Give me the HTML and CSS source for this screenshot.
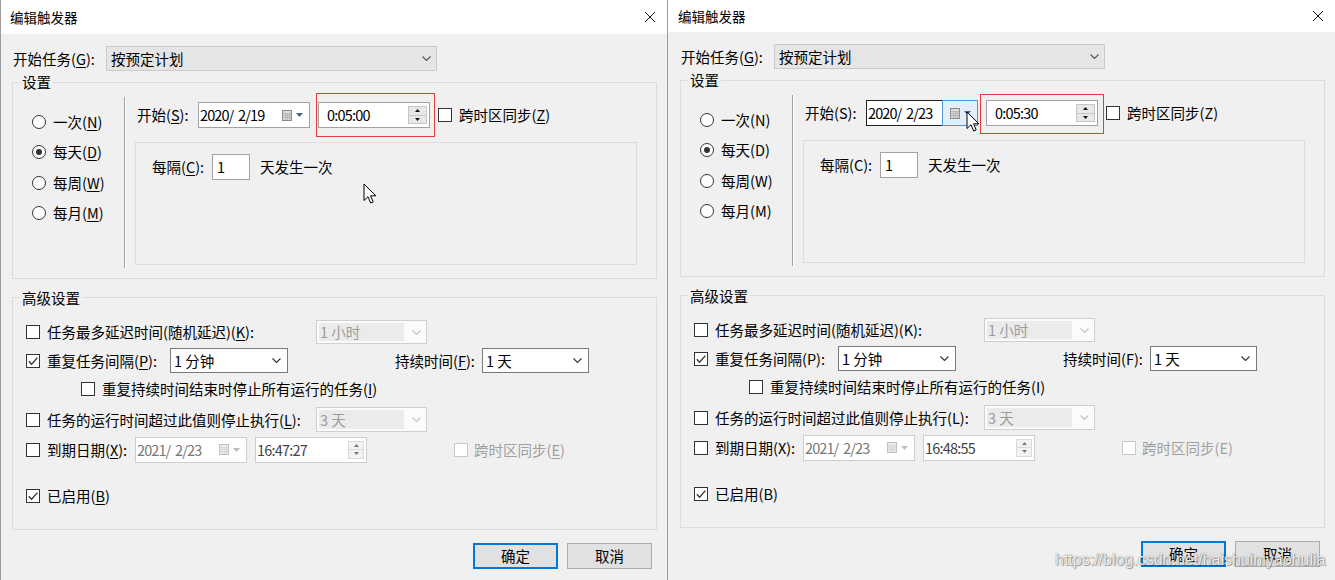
FILE: index.html
```html
<!DOCTYPE html>
<html lang="zh-CN">
<head>
<meta charset="utf-8">
<title>编辑触发器</title>
<link rel="stylesheet" href="styles.css">
</head>
<body>
<div class="screen">

  <!-- LEFT DIALOG -->
  <section class="dialog dl">
    <header class="titlebar">
      <span class="title">编辑触发器</span>
      <svg class="close" viewBox="0 0 10 10"><path d="M0 0L10 10M10 0L0 10"/></svg>
    </header>
    <div class="body">
      <div class="start-row">
        <span class="lbl-start">开始任务(<u>G</u>):</span>
        <div class="combo combo-main"><span class="ctext">按预定计划</span><svg class="chev" viewBox="0 0 9 5"><path d="M0.5 0.5L4.5 4.5L8.5 0.5"/></svg></div>
      </div>

      <fieldset class="group">
        <legend>设置</legend>
        <div class="settings">
          <div class="radios">
            <div class="radio-row"><span class="radio"></span><span>一次(<u>N</u>)</span></div>
            <div class="radio-row"><span class="radio on"></span><span>每天(<u>D</u>)</span></div>
            <div class="radio-row"><span class="radio"></span><span>每周(<u>W</u>)</span></div>
            <div class="radio-row"><span class="radio"></span><span>每月(<u>M</u>)</span></div>
          </div>
          <div class="sep"></div>
          <div class="sched">
            <div class="sched-row">
              <span class="lbl-s">开始(<u>S</u>):</span>
              <div class="date">
                <span class="dtext">2020/  2/19</span>
                <span class="dbtn">
                  <svg class="cal" viewBox="0 0 10 11"><rect x="0.5" y="0.5" width="9" height="10" fill="#dcdcdc" stroke="#8a8a8a"/><path d="M1 3.5H9M1 5.5H9M1 7.5H9M3.5 3V10M5.5 3V10M7.5 3V10" stroke="#b0b0b0" stroke-width="0.8"/></svg>
                  <svg class="tri" viewBox="0 0 7 4"><path d="M0 0H7L3.5 4Z"/></svg>
                </span>
              </div>
              <div class="time-wrap">
                <div class="time">
                  <span class="ttext">0:05:00</span>
                  <span class="spin"><span><svg viewBox="0 0 5 3"><path d="M2.5 0L5 3H0Z"/></svg></span><span><svg viewBox="0 0 5 3"><path d="M0 0H5L2.5 3Z"/></svg></span></span>
                </div>
                <div class="redbox rb-l"></div>
              </div>
              <span class="cb"></span>
              <span class="cb-lbl">跨时区同步(<u>Z</u>)</span>
            </div>
            <div class="daily">
              <span class="lbl-c">每隔(<u>C</u>):</span>
              <span class="num">1</span>
              <span class="daytext">天发生一次</span>
            </div>
          </div>
        </div>
      </fieldset>

      <fieldset class="group g-adv">
        <legend>高级设置</legend>
        <div class="adv">
          <div class="row r1">
            <span class="cb"></span>
            <span class="lbl w269">任务最多延迟时间(随机延迟)(<u>K</u>):</span>
            <div class="combo dis w111"><span class="ctext">1 小时</span><svg class="chev" viewBox="0 0 9 5"><path d="M0.5 0.5L4.5 4.5L8.5 0.5"/></svg></div>
          </div>
          <div class="row r2">
            <span class="cb"><svg viewBox="0 0 12 12"><path d="M1.8 6.2L4.6 9.2L10.4 2.6"/></svg></span>
            <span class="lbl w123">重复任务间隔(<u>P</u>):</span>
            <div class="combo en w118"><span class="ctext">1 分钟</span><svg class="chev" viewBox="0 0 9 5"><path d="M0.5 0.5L4.5 4.5L8.5 0.5"/></svg></div>
            <span class="lbl w87 ml107">持续时间(<u>F</u>):</span>
            <div class="combo en w107"><span class="ctext">1 天</span><svg class="chev" viewBox="0 0 9 5"><path d="M0.5 0.5L4.5 4.5L8.5 0.5"/></svg></div>
          </div>
          <div class="row r3">
            <span class="cb ml55"></span>
            <span class="lbl">重复持续时间结束时停止所有运行的任务(<u>I</u>)</span>
          </div>
          <div class="row r4">
            <span class="cb"></span>
            <span class="lbl w269">任务的运行时间超过此值则停止执行(<u>L</u>):</span>
            <div class="combo dis w111"><span class="ctext">3 天</span><svg class="chev" viewBox="0 0 9 5"><path d="M0.5 0.5L4.5 4.5L8.5 0.5"/></svg></div>
          </div>
          <div class="row r5">
            <span class="cb"></span>
            <span class="lbl w88">到期日期(<u>X</u>):</span>
            <div class="date ddis">
              <span class="dtext">2021/  2/23</span>
              <span class="dbtn">
                <svg class="cal" viewBox="0 0 10 11"><rect x="0.5" y="0.5" width="9" height="10" fill="#ececec" stroke="#c2c2c2"/><path d="M1 3.5H9M1 5.5H9M1 7.5H9M3.5 3V10M5.5 3V10M7.5 3V10" stroke="#d6d6d6" stroke-width="0.8"/></svg>
                <svg class="tri" viewBox="0 0 7 4"><path d="M0 0H7L3.5 4Z"/></svg>
              </span>
            </div>
            <div class="time tdis">
              <span class="ttext">16:47:27</span>
              <span class="spin"><span><svg viewBox="0 0 5 3"><path d="M2.5 0L5 3H0Z"/></svg></span><span><svg viewBox="0 0 5 3"><path d="M0 0H5L2.5 3Z"/></svg></span></span>
            </div>
            <span class="cb cbdis ml87"></span>
            <span class="lbl gray ml6">跨时区同步(<u>E</u>)</span>
          </div>
          <div class="row r6">
            <span class="cb"><svg viewBox="0 0 12 12"><path d="M1.8 6.2L4.6 9.2L10.4 2.6"/></svg></span>
            <span class="lbl">已启用(<u>B</u>)</span>
          </div>
        </div>
      </fieldset>

      <div class="buttons">
        <button class="btn default">确定</button>
        <button class="btn">取消</button>
      </div>
    </div>
  </section>

  <!-- RIGHT DIALOG -->
  <section class="dialog dr">
    <header class="titlebar">
      <span class="title">编辑触发器</span>
      <svg class="close" viewBox="0 0 10 10"><path d="M0 0L10 10M10 0L0 10"/></svg>
    </header>
    <div class="body">
      <div class="start-row">
        <span class="lbl-start">开始任务(<u>G</u>):</span>
        <div class="combo combo-main"><span class="ctext">按预定计划</span><svg class="chev" viewBox="0 0 9 5"><path d="M0.5 0.5L4.5 4.5L8.5 0.5"/></svg></div>
      </div>

      <fieldset class="group">
        <legend>设置</legend>
        <div class="settings">
          <div class="radios">
            <div class="radio-row"><span class="radio"></span><span>一次(N)</span></div>
            <div class="radio-row"><span class="radio on"></span><span>每天(D)</span></div>
            <div class="radio-row"><span class="radio"></span><span>每周(W)</span></div>
            <div class="radio-row"><span class="radio"></span><span>每月(M)</span></div>
          </div>
          <div class="sep"></div>
          <div class="sched">
            <div class="sched-row">
              <span class="lbl-s">开始(S):</span>
              <div class="date dhover">
                <span class="dtext">2020/  2/23</span>
                <span class="dbtn">
                  <svg class="cal" viewBox="0 0 10 11"><rect x="0.5" y="0.5" width="9" height="10" fill="#dcdcdc" stroke="#8a8a8a"/><path d="M1 3.5H9M1 5.5H9M1 7.5H9M3.5 3V10M5.5 3V10M7.5 3V10" stroke="#b0b0b0" stroke-width="0.8"/></svg>
                  <svg class="tri" viewBox="0 0 7 4"><path d="M0 0H7L3.5 4Z"/></svg>
                </span>
              </div>
              <div class="time-wrap">
                <div class="time">
                  <span class="ttext">0:05:30</span>
                  <span class="spin"><span><svg viewBox="0 0 5 3"><path d="M2.5 0L5 3H0Z"/></svg></span><span><svg viewBox="0 0 5 3"><path d="M0 0H5L2.5 3Z"/></svg></span></span>
                </div>
                <div class="redbox rb-r"></div>
              </div>
              <span class="cb"></span>
              <span class="cb-lbl">跨时区同步(Z)</span>
            </div>
            <div class="daily">
              <span class="lbl-c">每隔(C):</span>
              <span class="num">1</span>
              <span class="daytext">天发生一次</span>
            </div>
          </div>
        </div>
      </fieldset>

      <fieldset class="group g-adv">
        <legend>高级设置</legend>
        <div class="adv">
          <div class="row r1">
            <span class="cb"></span>
            <span class="lbl w269">任务最多延迟时间(随机延迟)(K):</span>
            <div class="combo dis w111"><span class="ctext">1 小时</span><svg class="chev" viewBox="0 0 9 5"><path d="M0.5 0.5L4.5 4.5L8.5 0.5"/></svg></div>
          </div>
          <div class="row r2">
            <span class="cb"><svg viewBox="0 0 12 12"><path d="M1.8 6.2L4.6 9.2L10.4 2.6"/></svg></span>
            <span class="lbl w123">重复任务间隔(P):</span>
            <div class="combo en w118"><span class="ctext">1 分钟</span><svg class="chev" viewBox="0 0 9 5"><path d="M0.5 0.5L4.5 4.5L8.5 0.5"/></svg></div>
            <span class="lbl w87 ml107">持续时间(F):</span>
            <div class="combo en w107"><span class="ctext">1 天</span><svg class="chev" viewBox="0 0 9 5"><path d="M0.5 0.5L4.5 4.5L8.5 0.5"/></svg></div>
          </div>
          <div class="row r3">
            <span class="cb ml55"></span>
            <span class="lbl">重复持续时间结束时停止所有运行的任务(I)</span>
          </div>
          <div class="row r4">
            <span class="cb"></span>
            <span class="lbl w269">任务的运行时间超过此值则停止执行(L):</span>
            <div class="combo dis w111"><span class="ctext">3 天</span><svg class="chev" viewBox="0 0 9 5"><path d="M0.5 0.5L4.5 4.5L8.5 0.5"/></svg></div>
          </div>
          <div class="row r5">
            <span class="cb"></span>
            <span class="lbl w88">到期日期(X):</span>
            <div class="date ddis">
              <span class="dtext">2021/  2/23</span>
              <span class="dbtn">
                <svg class="cal" viewBox="0 0 10 11"><rect x="0.5" y="0.5" width="9" height="10" fill="#ececec" stroke="#c2c2c2"/><path d="M1 3.5H9M1 5.5H9M1 7.5H9M3.5 3V10M5.5 3V10M7.5 3V10" stroke="#d6d6d6" stroke-width="0.8"/></svg>
                <svg class="tri" viewBox="0 0 7 4"><path d="M0 0H7L3.5 4Z"/></svg>
              </span>
            </div>
            <div class="time tdis">
              <span class="ttext">16:48:55</span>
              <span class="spin"><span><svg viewBox="0 0 5 3"><path d="M2.5 0L5 3H0Z"/></svg></span><span><svg viewBox="0 0 5 3"><path d="M0 0H5L2.5 3Z"/></svg></span></span>
            </div>
            <span class="cb cbdis ml87"></span>
            <span class="lbl gray ml6">跨时区同步(E)</span>
          </div>
          <div class="row r6">
            <span class="cb"><svg viewBox="0 0 12 12"><path d="M1.8 6.2L4.6 9.2L10.4 2.6"/></svg></span>
            <span class="lbl">已启用(B)</span>
          </div>
        </div>
      </fieldset>

      <div class="buttons">
        <button class="btn default">确定</button>
        <button class="btn">取消</button>
      </div>
    </div>
  </section>

  <svg class="cursor cur-l" viewBox="0 0 14 22"><path d="M1 1V17.5L5 13.7L7.7 20L10.2 19L7.6 12.8H12.9Z"/></svg>
  <svg class="cursor cur-r" viewBox="0 0 14 22"><path d="M1 1V17.5L5 13.7L7.7 20L10.2 19L7.6 12.8H12.9Z"/></svg>
  <div class="watermark">https://blog.csdn.net/haishuiniyaohulia</div>
</div>
</body>
</html>
```

FILE: styles.css
```css
* { box-sizing: border-box; }

html, body {
  margin: 0;
  padding: 0;
  background: #f0f0f0;
}

body {
  font-family: "Noto Sans CJK SC", "Noto Sans", sans-serif;
  font-size: 14.5px;
  line-height: 18px;
  color: #000;
}

u {
  text-decoration: underline;
  text-underline-offset: 2px;
  text-decoration-thickness: 1px;
}

.screen {
  position: relative;
  display: flex;
  width: 1335px;
  height: 580px;
  overflow: hidden;
}

.dialog {
  display: flex;
  flex-direction: column;
  background: #f0f0f0;
  flex: none;
}

.dl {
  width: 668px;
  border-left: 1px solid #9c9c9c;
  border-right: 1px solid #9c9c9c;
}

.dr {
  width: 667px;
}

.titlebar {
  display: flex;
  align-items: center;
  justify-content: space-between;
  height: 34px;
  background: #fff;
  padding: 0 12px 0 9px;
}

.dr .titlebar {
  height: 32px;
  padding-left: 10px;
}

.title {
  font-size: 13.5px;
  margin-top: -1px;
}

.close {
  width: 10px;
  height: 10px;
  stroke: #111;
  stroke-width: 1;
  fill: none;
}

.body {
  padding: 0 10px 0 11px;
}

.dr .body {
  padding: 0 10px 0 12px;
}

/* start row */
.start-row {
  display: flex;
  align-items: center;
  height: 25px;
  margin-top: 12px;
}

.lbl-start {
  width: 94px;
  padding-left: 1px;
  flex: none;
}

.combo {
  display: flex;
  align-items: center;
  justify-content: space-between;
  height: 25px;
  flex: none;
}

.combo .chev {
  width: 9px;
  height: 5px;
  fill: none;
  stroke-width: 1.1;
}

.combo-main {
  width: 331px;
  background: #e5e5e5;
  border: 1px solid #cacaca;
  padding: 0 5px 0 4px;
}

.combo-main .chev { stroke: #555; }

.combo.en {
  background: #fff;
  border: 1px solid #7a7a7a;
  padding: 0 6px 0 3px;
}

.combo.en .chev { stroke: #333; }

.combo.dis {
  background: #fbfbfb;
  border: 1px solid #cfcfcf;
  padding: 2px 5px 2px 2px;
  height: 24px;
  color: #9c9c9c;
}

.combo.dis .ctext {
  flex: 1;
  align-self: stretch;
  background: #ebebeb;
  padding-left: 1px;
  margin-right: 8px;
  display: flex;
  align-items: center;
}

.combo.dis .chev { stroke: #c2c2c2; }

.r4 .combo.dis { height: 25px; }

.w111 { width: 111px; }
.w118 { width: 118px; }
.w107 { width: 107px; }

/* group boxes */
.group {
  margin: 2px 0 0;
  padding: 0;
  border: 1px solid #dcdcdc;
  min-width: 0;
}

.group legend {
  margin-left: 7px;
  padding: 0 2px;
  line-height: 18px;
}

.g-adv {
  margin-top: 9.5px;
}

.settings {
  display: flex;
  padding: 6px 19px 10px 19px;
}

.radios {
  width: 92px;
  flex: none;
  padding-top: 9.5px;
}

.radio-row {
  display: flex;
  align-items: center;
  gap: 7px;
  height: 30.5px;
}

.radio {
  width: 14px;
  height: 14px;
  border: 1px solid #333;
  border-radius: 50%;
  background: #fff;
  display: flex;
  align-items: center;
  justify-content: center;
  flex: none;
}

.radio.on::after {
  content: "";
  width: 6px;
  height: 6px;
  border-radius: 50%;
  background: #333;
}

.sep {
  width: 2px;
  flex: none;
  border-left: 1px solid #a0a0a0;
  border-right: 1px solid #fff;
}

.sched {
  flex: 1;
  margin-left: 9px;
  padding: 5px 0 3px;
}

.sched-row {
  display: flex;
  align-items: center;
  height: 26px;
  padding-left: 2px;
}

.lbl-s {
  width: 61px;
  flex: none;
}

/* date picker */
.date {
  display: flex;
  align-items: center;
  width: 112px;
  height: 26px;
  border: 1px solid #a3a3a3;
  background: #fff;
  flex: none;
}

.date .dtext {
  flex: 1;
  min-width: 0;
  padding-left: 1px;
  white-space: pre;
  letter-spacing: -0.9px;
}

.date .dbtn {
  width: 33px;
  height: 100%;
  display: flex;
  align-items: center;
  justify-content: center;
  gap: 4px;
  flex: none;
}

.cal {
  width: 10px;
  height: 11px;
}

.tri {
  width: 7px;
  height: 4px;
  fill: #4e6286;
}

.date.dhover {
  border-color: #222;
}

.date.dhover .dbtn {
  width: 36px;
  height: 26px;
  margin: 0 -1px 0 0;
  border: 1px solid #4f98d8;
  background: #e3eef9;
}

.date.ddis {
  border-color: #cdcdcd;
  color: #777;
}

.date.ddis .tri { fill: #bdbdbd; }

/* time */
.time-wrap {
  position: relative;
  margin-left: 8px;
  flex: none;
}

.time {
  display: flex;
  align-items: center;
  width: 112px;
  height: 26px;
  border: 1px solid #a3a3a3;
  background: #fff;
  flex: none;
}

.time .ttext {
  flex: 1;
  padding-left: 8px;
  letter-spacing: -0.8px;
}

.spin {
  width: 19px;
  height: 18px;
  margin-right: 2px;
  display: flex;
  flex-direction: column;
  border: 1px solid #c6c6c6;
  background: #e8e8e8;
}

.spin span {
  flex: 1;
  display: flex;
  align-items: center;
  justify-content: center;
}

.spin span + span {
  border-top: 1px solid #c6c6c6;
}

.spin svg {
  width: 5px;
  height: 3px;
  fill: #111;
}

.time.tdis {
  margin-left: 8px;
  border-color: #cdcdcd;
  color: #444;
}

.time.tdis .ttext { padding-left: 1px; }

.time.tdis .spin {
  width: 16px;
  border-color: #dadada;
  background: #f3f3f3;
}

.time.tdis .spin span + span { border-top-color: #dadada; }
.time.tdis .spin svg { fill: #777; }

.redbox {
  position: absolute;
  border: 1px solid #e23a3f;
  pointer-events: none;
}

.rb-l { left: -2.5px; right: -5px; top: -9.5px; bottom: -9px; }
.rb-r { left: -6px; right: -6px; top: -6px; bottom: -7.5px; }

/* checkbox */
.cb {
  width: 14px;
  height: 14px;
  border: 1px solid #333;
  background: #fff;
  display: flex;
  align-items: center;
  justify-content: center;
  flex: none;
}

.cb svg {
  width: 12px;
  height: 12px;
  fill: none;
  stroke: #333;
  stroke-width: 1.3;
}

.sched-row .cb { margin-left: 8px; }

.cb-lbl { margin-left: 7px; }

.cb.cbdis {
  border-color: #c8c8c8;
}

/* daily inner box */
.daily {
  display: flex;
  align-items: flex-start;
  height: 123px;
  margin-top: 14px;
  border: 1px solid #dcdcdc;
  padding: 11px 0 0 16px;
}

.lbl-c {
  width: 60px;
  height: 26px;
  display: flex;
  align-items: center;
  flex: none;
}

.num {
  width: 38px;
  height: 26px;
  border: 1px solid #a3a3a3;
  background: #fff;
  padding-left: 4px;
  display: flex;
  align-items: center;
  flex: none;
}

.daytext {
  height: 26px;
  display: flex;
  align-items: center;
  margin-left: 10px;
}

/* advanced rows */
.adv {
  padding: 13.5px 0 23.5px 13px;
}

.row {
  display: flex;
  align-items: center;
}

.row .cb + .lbl { margin-left: 7px; }

.lbl { flex: none; white-space: nowrap; }

.w269 { width: 269px; }
.w123 { width: 123px; }
.w87 { width: 87px; }
.w88 { width: 88px; }

.ml107 { margin-left: 107px; }
.ml55 { margin-left: 55px; }
.ml87 { margin-left: 87px; }
.row .cb + .lbl.ml6 { margin-left: 6px; }

.gray { color: #a0a0a0; }

.r1 { height: 24px; }
.r2 { height: 25px; margin-top: 4px; }
.r3 { height: 18px; margin-top: 6.5px; }
.r4 { height: 25px; margin-top: 9.5px; }
.r5 { height: 25px; margin-top: 5px; }
.r6 { height: 19px; margin-top: 24px; }

/* buttons */
.buttons {
  display: flex;
  justify-content: flex-end;
  gap: 9px;
  padding-right: 5px;
  margin-top: 13px;
}

.btn {
  width: 85px;
  height: 26px;
  background: #e1e1e1;
  border: 1px solid #adadad;
  font: inherit;
  color: #000;
  display: flex;
  align-items: center;
  justify-content: center;
  padding: 0;
}

.btn.default {
  border: 2px solid #0078d7;
}

/* overlays */
.cursor {
  position: absolute;
  width: 14px;
  height: 22px;
  fill: #fff;
  stroke: #000;
  stroke-width: 1;
  stroke-linejoin: miter;
}

.cur-l { left: 362.5px; top: 182.5px; }
.cur-r { left: 966px; top: 110.5px; }

.watermark {
  position: absolute;
  left: 1055px;
  top: 550px;
  font-family: "Liberation Sans", Arial, sans-serif;
  font-size: 16px;
  line-height: 20px;
  color: rgba(255, 255, 255, 0.88);
  text-shadow: 0 0 1px #6a6a6a, 1px 1px 1px rgba(0, 0, 0, 0.35);
  white-space: nowrap;
  pointer-events: none;
}
```
